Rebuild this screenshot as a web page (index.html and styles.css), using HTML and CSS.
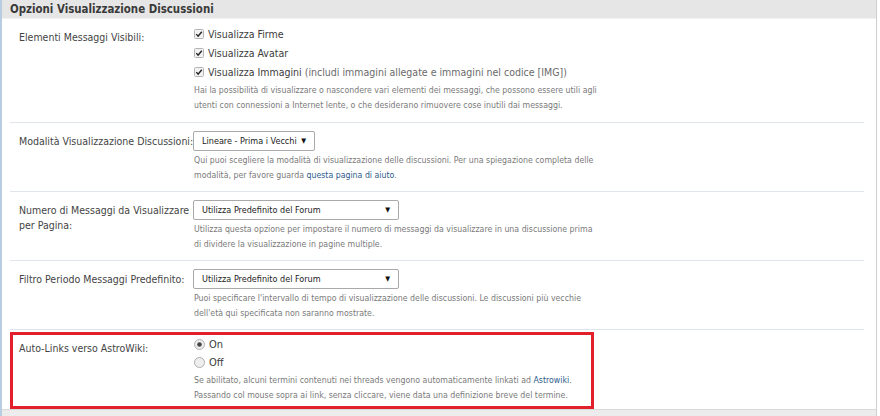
FILE: index.html
```html
<!DOCTYPE html>
<html lang="it">
<head>
<meta charset="utf-8">
<title>Opzioni Visualizzazione Discussioni</title>
<link rel="stylesheet" href="styles.css">
</head>
<body>
<div class="panel">
  <div class="head">Opzioni Visualizzazione Discussioni</div>
  <div class="rows">
    <div class="row row-check">
      <div class="label">Elementi Messaggi Visibili:</div>
      <div class="ctrl">
        <div class="opt"><span class="cb"><svg viewBox="0 0 10 10" width="10" height="10"><rect x="0.5" y="0.5" width="9" height="9" rx="1" fill="#f2f2f2" stroke="#b4b4b4"/><path d="M2.3 5.1 L4.1 7.1 L7.8 2.7" fill="none" stroke="#222" stroke-width="1.4"/></svg></span>Visualizza Firme</div>
        <div class="opt"><span class="cb"><svg viewBox="0 0 10 10" width="10" height="10"><rect x="0.5" y="0.5" width="9" height="9" rx="1" fill="#f2f2f2" stroke="#b4b4b4"/><path d="M2.3 5.1 L4.1 7.1 L7.8 2.7" fill="none" stroke="#222" stroke-width="1.4"/></svg></span>Visualizza Avatar</div>
        <div class="opt"><span class="cb"><svg viewBox="0 0 10 10" width="10" height="10"><rect x="0.5" y="0.5" width="9" height="9" rx="1" fill="#f2f2f2" stroke="#b4b4b4"/><path d="M2.3 5.1 L4.1 7.1 L7.8 2.7" fill="none" stroke="#222" stroke-width="1.4"/></svg></span>Visualizza Immagini <span class="note">(includi immagini allegate e immagini nel codice [IMG])</span></div>
        <p class="help">Hai la possibilità di visualizzare o nascondere vari elementi dei messaggi, che possono essere utili agli<br>utenti con connessioni a Internet lente, o che desiderano rimuovere cose inutili dai messaggi.</p>
      </div>
    </div>
    <div class="row">
      <div class="label">Modalità Visualizzazione Discussioni:</div>
      <div class="ctrl">
        <div class="select sel-short"><span>Lineare - Prima i Vecchi</span><span class="arrow">▼</span></div>
        <p class="help">Qui puoi scegliere la modalità di visualizzazione delle discussioni. Per una spiegazione completa delle<br>modalità, per favore guarda <a href="#" class="link">questa pagina di aiuto</a>.</p>
      </div>
    </div>
    <div class="row">
      <div class="label">Numero di Messaggi da Visualizzare<br>per Pagina:</div>
      <div class="ctrl">
        <div class="select sel-long"><span>Utilizza Predefinito del Forum</span><span class="arrow">▼</span></div>
        <p class="help">Utilizza questa opzione per impostare il numero di messaggi da visualizzare in una discussione prima<br>di dividere la visualizzazione in pagine multiple.</p>
      </div>
    </div>
    <div class="row">
      <div class="label">Filtro Periodo Messaggi Predefinito:</div>
      <div class="ctrl">
        <div class="select sel-long"><span>Utilizza Predefinito del Forum</span><span class="arrow">▼</span></div>
        <p class="help">Puoi specificare l'intervallo di tempo di visualizzazione delle discussioni. Le discussioni più vecchie<br>dell'età qui specificata non saranno mostrate.</p>
      </div>
    </div>
    <div class="row row-radio">
      <div class="label">Auto-Links verso AstroWiki:</div>
      <div class="ctrl">
        <div class="opt"><span class="rb"><svg viewBox="0 0 11 11" width="11" height="11"><circle cx="5.5" cy="5.5" r="5" fill="#eeeeee" stroke="#b0b0b0"/><circle cx="5.5" cy="5.5" r="2.3" fill="#444"/></svg></span>On</div>
        <div class="opt"><span class="rb"><svg viewBox="0 0 11 11" width="11" height="11"><circle cx="5.5" cy="5.5" r="5" fill="#eeeeee" stroke="#b0b0b0"/></svg></span>Off</div>
        <p class="help">Se abilitato, alcuni termini contenuti nei threads vengono automaticamente linkati ad <a href="#" class="link">Astrowiki</a>.<br>Passando col mouse sopra ai link, senza cliccare, viene data una definizione breve del termine.</p>
      </div>
      <div class="mark"></div>
    </div>
  </div>
  <div class="foot"></div>
</div>
</body>
</html>
```

FILE: styles.css
```css
html, body {
  margin: 0;
  padding: 0;
  background: #ffffff;
}

body {
  font-family: "DejaVu Sans Condensed", "DejaVu Sans", sans-serif;
  font-stretch: condensed;
  color: #444444;
}

.panel {
  width: 877px;
  height: 416px;
  box-sizing: border-box;
  border-left: 2px solid #b8cde0;
  border-right: 1px solid #cfcfcf;
  display: flex;
  flex-direction: column;
}

.head {
  height: 18px;
  background: #e6e6e6;
  border-bottom: 1px solid #f2f2f2;
  padding-left: 8px;
  font-weight: bold;
  font-size: 11.4px;
  line-height: 18px;
  color: #3a3a3a;
}

.rows {
  flex: 1;
}

.row {
  position: relative;
  margin: 0 12px 0 8px;
  display: grid;
  grid-template-columns: 184px 1fr;
  padding: 8px 0 9px;
  border-bottom: 1px solid #dfe5ea;
}

.row-check {
  padding-top: 5px;
  padding-bottom: 10px;
}

.row-radio {
  padding-top: 5px;
  padding-bottom: 6px;
  border-bottom: none;
}

.label {
  padding-left: 9px;
  font-size: 10.5px;
  line-height: 15px;
  padding-top: 3px;
  white-space: nowrap;
}

.row-check .label,
.row-radio .label {
  padding-top: 6px;
}

.ctrl {
  display: flex;
  flex-direction: column;
  align-items: flex-start;
}

.opt {
  display: flex;
  align-items: center;
  height: 19px;
  font-size: 10.5px;
  color: #3c3c3c;
}

.row-radio .opt {
  height: 18px;
  font-size: 11px;
}

.note {
  color: #6a6a6a;
  margin-left: 3px;
}

.cb, .rb {
  display: inline-flex;
  width: 10px;
  height: 11px;
  align-items: center;
  margin-right: 4px;
}

.rb {
  width: 11px;
}

.select {
  box-sizing: border-box;
  height: 20px;
  margin-left: -1px;
  border: 1px solid #a9a9a9;
  border-radius: 2px;
  background: #ffffff;
  display: flex;
  align-items: center;
  justify-content: space-between;
  padding: 0 8px 0 8px;
  font-size: 9px;
  color: #222222;
}

.sel-short {
  width: 122px;
}

.sel-long {
  width: 206px;
}

.arrow {
  font-size: 7px;
  color: #111111;
}

.help {
  margin: 2px 0 0;
  font-size: 8.72px;
  line-height: 14.5px;
  color: #7a7a7a;
}

.link {
  color: #2d5c8c;
  text-decoration: none;
}

.mark {
  position: absolute;
  left: 0;
  top: 2px;
  width: 584px;
  height: 77px;
  box-sizing: border-box;
  border: 3px solid #e2202c;
  pointer-events: none;
}

.foot {
  height: 6px;
  background: #ececec;
  border-top: 1px solid #d9d9d9;
}
```
